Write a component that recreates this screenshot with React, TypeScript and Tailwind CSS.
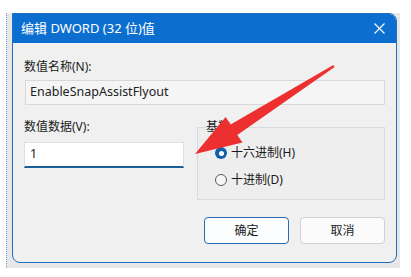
import React from 'react';

const font = "font-['Segoe_UI','Noto_Sans','Noto_Sans_CJK_SC',sans-serif]";

function Radio({ checked }: { checked?: boolean }) {
  if (checked) {
    return (
      <span className="grid h-[12px] w-[12px] place-items-center rounded-full bg-[#1360a8]">
        <span className="h-[5px] w-[5px] rounded-full bg-white" />
      </span>
    );
  }
  return <span className="h-[12px] w-[12px] rounded-full border border-[#5a5a5a] bg-[#f7f7f7]" />;
}

function Arrow() {
  // red annotation arrow pointing at the value field
  return (
    <svg className="pointer-events-none absolute left-0 top-0" width="411" height="277" viewBox="0 0 411 277">
      <polygon
        points="195,154 242.5,142.6 237.3,135 334.6,66.9 333.4,65.1 230.6,124.6 225.6,117"
        fill="#ee2f30"
      />
    </svg>
  );
}

export default function App() {
  return (
    <div className={`relative h-[277px] w-[411px] overflow-hidden bg-white pl-[6px] pt-[13px] ${font}`}>
      <div className="h-[255px] w-[394px] border-l border-dotted border-[#7a9cc7] bg-[#e7e7e7] pl-[5px]">
        <div className="flex h-[250px] w-[385px] flex-col overflow-hidden rounded-b-[8px] rounded-tr-[8px] border border-[#1d6fc4] bg-[#f0f0f0]">
          <div className="flex h-[29px] shrink-0 items-center justify-between bg-[#0c6fd0] pl-[8px] pr-[10px] text-white">
            <span className="text-[13px] leading-none">编辑 DWORD (32 位)值</span>
            <svg width="11" height="11" viewBox="0 0 11 11" className="mr-[1px]">
              <path d="M0.5 0.5 L10.5 10.5 M10.5 0.5 L0.5 10.5" stroke="white" strokeWidth="1.1" />
            </svg>
          </div>

          <div className="flex flex-col pl-[11px] text-[12px] text-[#1b1b1b]">
            <div className="mt-[16px] h-[16px] leading-[16px]">数值名称(N):</div>
            <div className="ml-[1px] mt-[5px] flex h-[25px] w-[360px] items-center border border-[#d8d8d8] bg-[#f5f5f5] pl-[4px] text-[12.5px] text-[#222]">
              EnableSnapAssistFlyout
            </div>

            <div className="mt-[14px] flex gap-[13px]">
              <div className="flex w-[160px] flex-col">
                <div className="h-[16px] leading-[16px]">数值数据(V):</div>
                <div className="mt-[7px] flex h-[26px] w-[160px] items-center border border-b-2 border-[#e0e0e0] border-b-[#1b5f98] bg-white pl-[5px] text-[12.5px]">
                  1
                </div>
              </div>

              <fieldset className="h-[81px] w-[188px] border border-[#dadada] bg-[#eeeeee] pl-[17px]">
                <legend className="ml-[-9px] h-[16px] leading-[16px]">基数</legend>
                <div className="mt-[10px] flex items-center gap-[4px]">
                  <Radio checked />
                  <span className="leading-[16px]">十六进制(H)</span>
                </div>
                <div className="mt-[11px] flex items-center gap-[4px]">
                  <Radio />
                  <span className="leading-[16px]">十进制(D)</span>
                </div>
              </fieldset>
            </div>

            <div className="mt-[17px] flex justify-end gap-[11px] pr-[11px]">
              <button className="h-[27px] w-[85px] rounded-[4px] border border-[#2a6bb0] bg-[#fcfdfe] text-[12px] text-[#1b1b1b]">
                确定
              </button>
              <button className="h-[27px] w-[85px] rounded-[4px] border border-[#d2d2d2] bg-[#fbfbfb] text-[12px] text-[#1b1b1b]">
                取消
              </button>
            </div>
          </div>
        </div>
      </div>
      <Arrow />
    </div>
  );
}
